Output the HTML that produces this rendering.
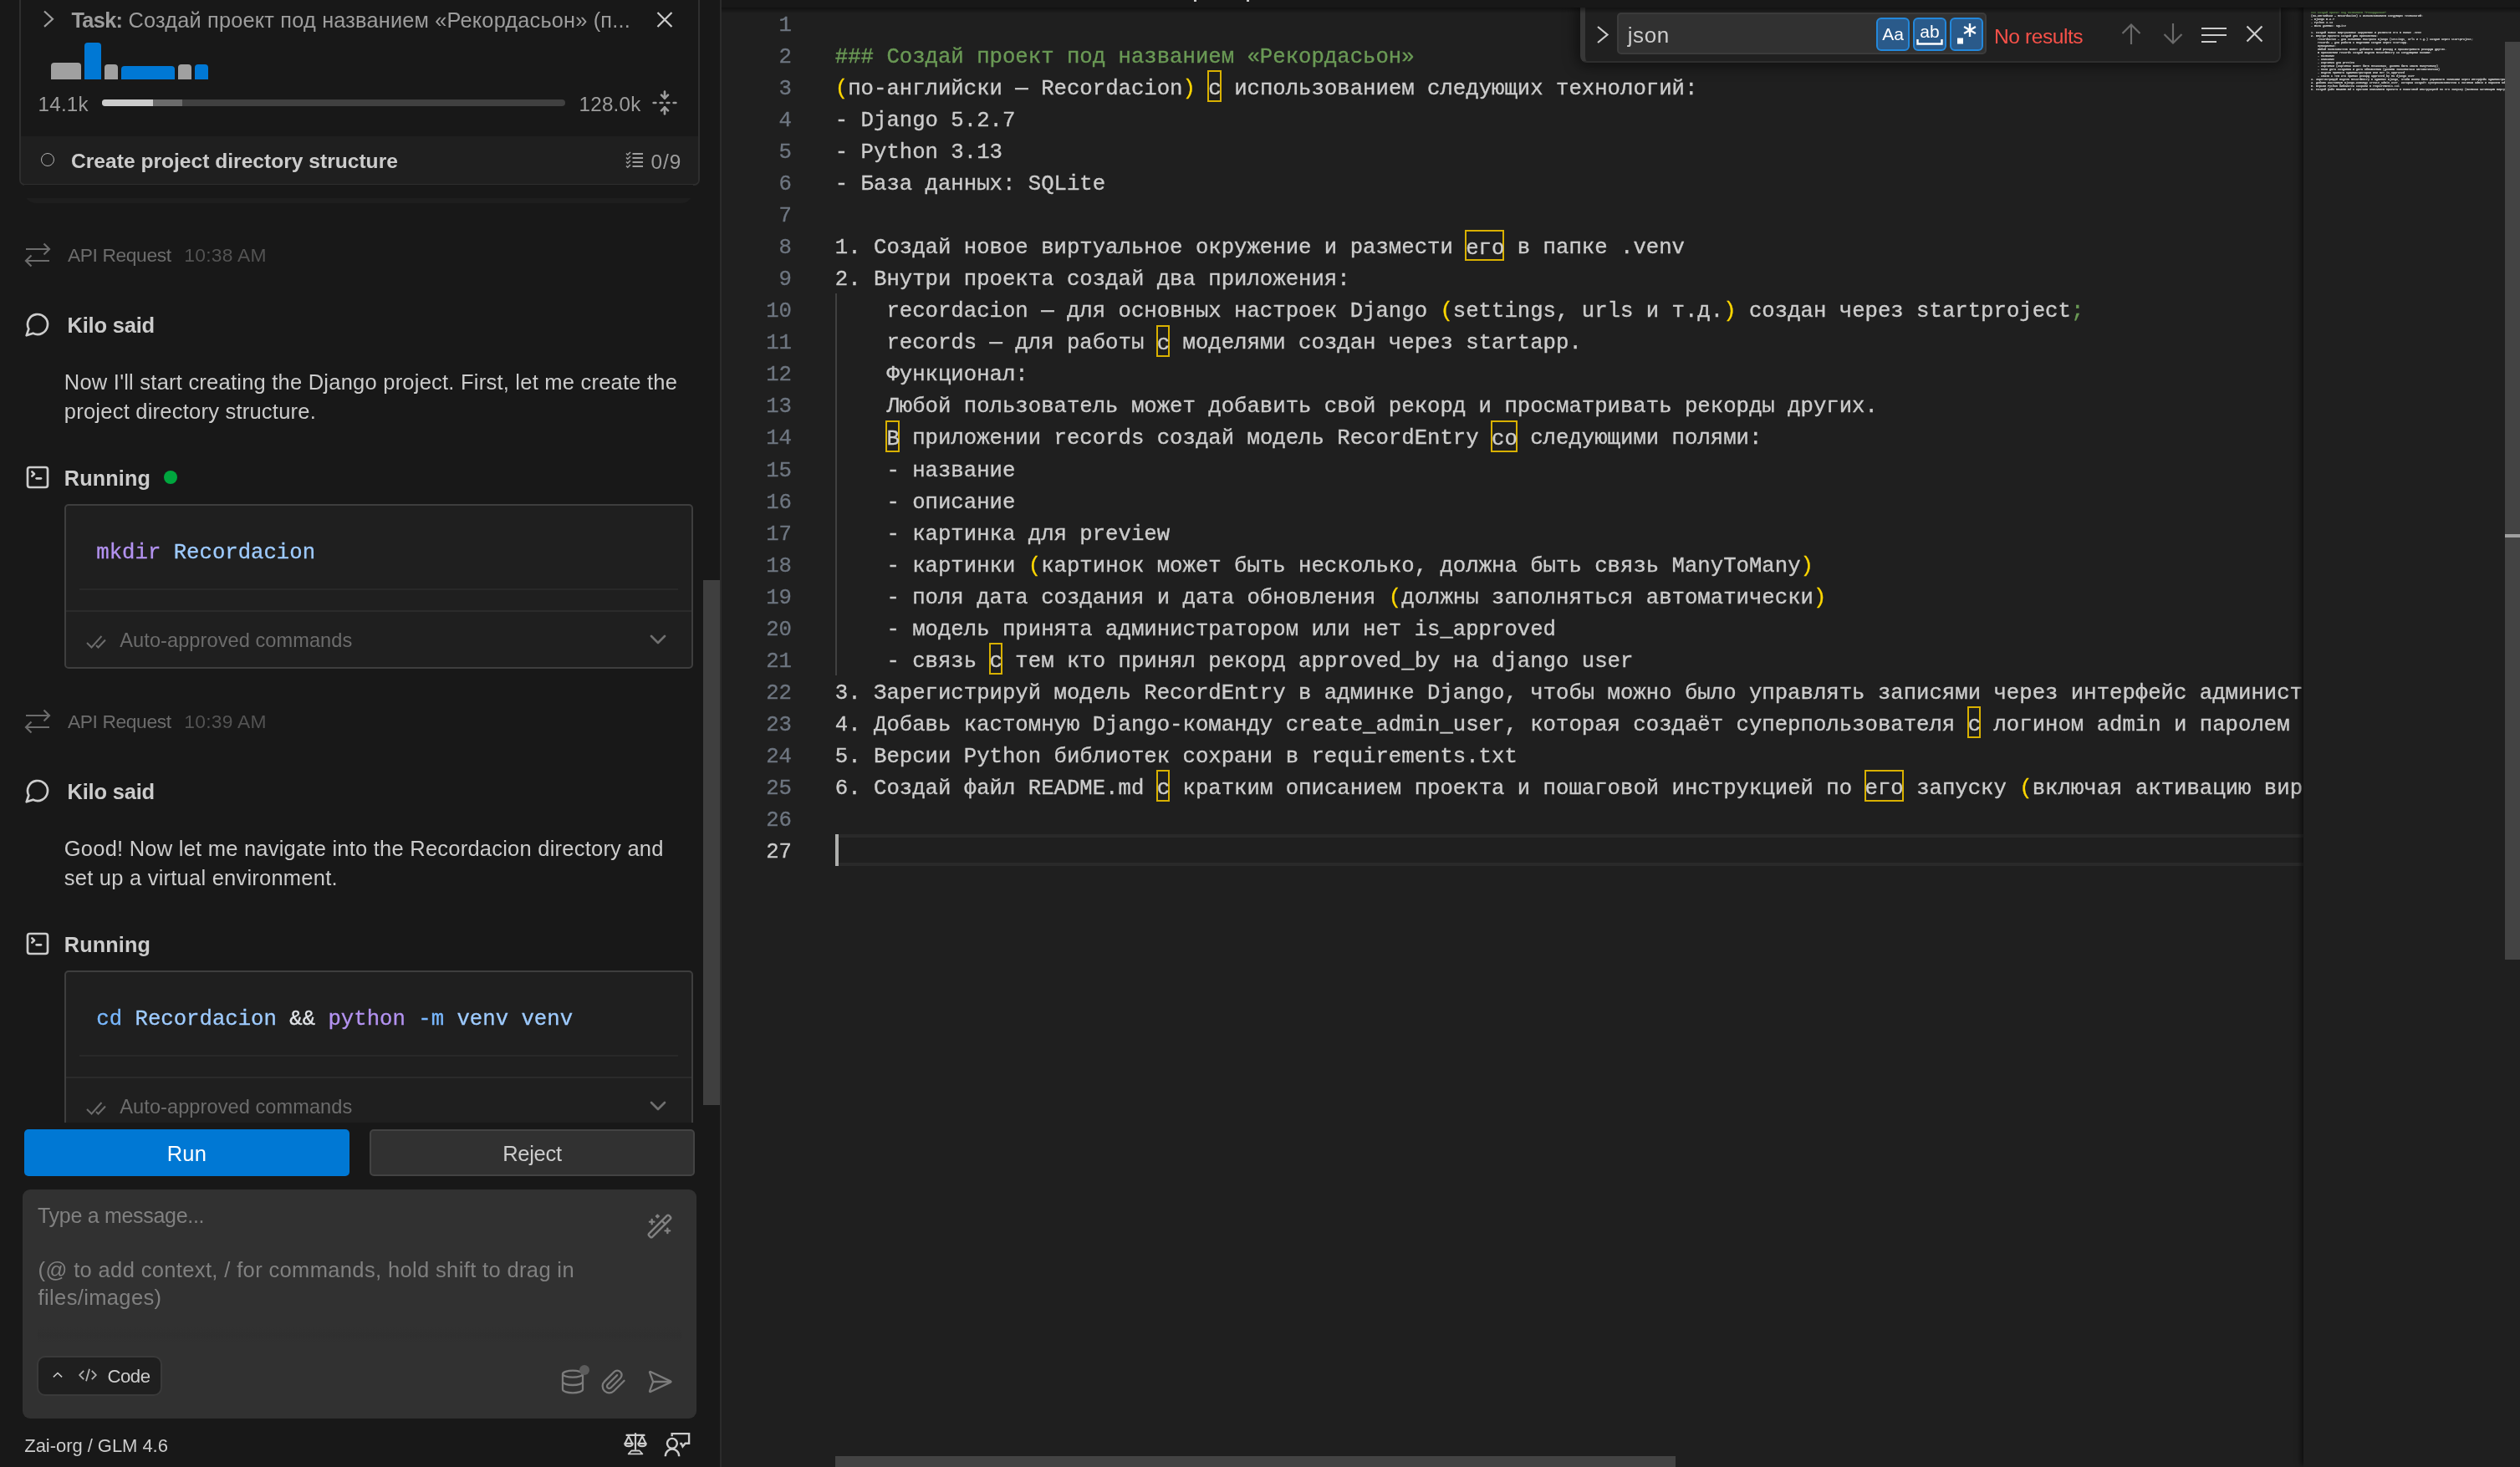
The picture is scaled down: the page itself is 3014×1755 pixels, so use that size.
<!DOCTYPE html>
<html lang="en">
<head>
<meta charset="utf-8">
<title>Kilo Code - Recordacion</title>
<style>
*{box-sizing:border-box;margin:0;padding:0}
html,body{width:3014px;height:1755px;overflow:hidden;background:#181818}
body{position:relative;font-family:"Liberation Sans",sans-serif;color:#cccccc;-webkit-font-smoothing:antialiased}
.abs{position:absolute}
.t{position:absolute;white-space:pre;line-height:32px;font-size:25.5px;letter-spacing:.2px}
.b{font-weight:bold}
svg{position:absolute;overflow:visible}
.ic{fill:none;stroke:currentColor;stroke-width:2;stroke-linecap:round;stroke-linejoin:round}
/* sidebar */
#side{will-change:transform;position:absolute;left:0;top:0;width:862px;height:1755px;background:#181818;overflow:hidden}
#chat{position:absolute;left:0;top:0;width:862px;height:1343px;overflow:hidden}
.card{position:absolute;left:23px;top:-10px;width:814px;height:232px;border:2px solid #2e2e2e;border-radius:7px;background:#181818}
.todo{position:absolute;left:0;bottom:0;width:810px;height:57px;background:#1f1f1f;border-radius:0 0 5px 5px}
.bar{position:absolute;border-radius:4px 4px 0 0}
.codebox{position:absolute;left:77px;width:752px;height:197.3px;border:2px solid #3e3e3e;border-radius:5px;background:#1f1f1f}
.mono{font-family:"Liberation Mono",monospace}
.code{-webkit-text-stroke:.3px currentColor;position:absolute;white-space:pre;font-family:"Liberation Mono",monospace;font-size:25.66px;line-height:38px}
/* editor */
#ed{will-change:transform;position:absolute;left:862px;top:0;width:2152px;height:1755px;background:#1f1f1f;overflow:hidden}
.ln{-webkit-text-stroke:.3px currentColor;position:absolute;left:0;width:85px;text-align:right;color:#6e7681;font-family:"Liberation Mono",monospace;font-size:25.66px;line-height:38px;height:38px;white-space:pre}
.l{-webkit-text-stroke:.35px currentColor;position:absolute;left:136.8px;height:38px;color:#cccccc;font-family:"Liberation Mono",monospace;font-size:25.66px;line-height:38px;white-space:pre}
.g{color:#6a9955}.y{color:#ffd700}
.u{box-shadow:inset 0 0 0 2px #d9b100;padding:7.6px 0 1.3px 1px;margin-left:-1px}
.tog{top:21px;width:40px;height:40px;border-radius:6px;background:#2a5a8a;border:2px solid #2488db}
.ml{position:absolute;left:0;white-space:pre;font-family:"Liberation Mono",monospace;font-size:16.665px;line-height:20px;height:20px;color:#ededed;font-weight:bold}
.ml.g{color:#6a9955}
</style>
</head>
<body>
<div id="side">
<div id="chat">
<!-- task card -->
<div class="card"><div class="todo"></div></div>
<svg style="left:45.5px;top:6.2px" width="32" height="32" viewBox="0 0 32 32"><path d="M7 7.5 L17 16.7 L7 25.9" fill="none" stroke="#9d9d9d" stroke-width="2.2"/></svg>
<div class="t" id="title" style="left:85.4px;top:8px;color:#9d9d9d;font-size:25.3px;letter-spacing:.2px"><span class="b" style="letter-spacing:-.65px">Task:</span> Создай проект под названием «Рекордасьон» (п...</div>
<svg style="left:779px;top:7px" width="32" height="32" viewBox="0 0 32 32"><path d="M7.5 8 L24.5 25 M24.5 8 L7.5 25" fill="none" stroke="#cccccc" stroke-width="2.2"/></svg>
<div class="bar" style="left:61px;top:75px;width:36px;height:20px;background:#a0a0a0"></div>
<div class="bar" style="left:101px;top:51px;width:20px;height:44px;background:#0078d4"></div>
<div class="bar" style="left:125px;top:77px;width:16px;height:18px;background:#a0a0a0"></div>
<div class="bar" style="left:145px;top:79px;width:64px;height:16px;background:#0078d4"></div>
<div class="bar" style="left:213px;top:77px;width:16px;height:18px;background:#a0a0a0"></div>
<div class="bar" style="left:233px;top:77px;width:16px;height:18px;background:#0078d4"></div>
<div class="t" id="k14" style="left:45.5px;top:109px;color:#9d9d9d;font-size:24.2px;letter-spacing:.25px">14.1k</div>
<div class="abs" style="left:122px;top:119px;width:554px;height:8px;border-radius:4px;background:#404040;overflow:hidden"><div class="abs" style="left:0;top:0;width:96px;height:8px;background:#6b6b6b"></div><div class="abs" style="left:0;top:0;width:61px;height:8px;background:#cccccc"></div></div>
<div class="t" id="k128" style="left:692.5px;top:109px;color:#9d9d9d;font-size:24.2px;letter-spacing:.25px">128.0k</div>
<svg style="left:779px;top:107px;color:#9d9d9d" width="32" height="32" viewBox="0 0 24 24" class="ic"><path d="M12 22v-6"/><path d="M12 8V2"/><path d="M4 12H2"/><path d="M10 12H8"/><path d="M16 12h-2"/><path d="M22 12h-2"/><path d="m15 19-3-3-3 3"/><path d="m15 5-3 3-3-3"/></svg>
<div class="abs" style="left:49px;top:183px;width:16px;height:16px;border:1.9px solid #b0b0b0;border-radius:50%"></div>
<div class="t b" id="todo" style="left:85px;top:177px;color:#cccccc;font-size:24.6px;letter-spacing:0">Create project directory structure</div>
<svg style="left:748px;top:181px" width="22" height="20" viewBox="0 0 22 20" fill="none" stroke="#9d9d9d" stroke-width="2"><path d="M8.5 3h12.5M8.5 8h12.5M8.5 13h12.5M8.5 18h12.5"/><path d="M1 2.5l1.7 1.7L6 1M1 7.5l1.7 1.7L6 6M1 12.5l1.7 1.7L6 11M1 17.5l1.7 1.7L6 16" stroke-width="1.6"/></svg>
<div class="t" id="n09" style="left:778.5px;top:177.5px;color:#9d9d9d;font-size:24.4px;letter-spacing:.9px">0/9</div>
<!-- prev message remnant -->
<div class="abs" style="left:29px;top:225px;width:800px;height:18px;border-radius:0 0 14px 14px;background:#1e1e1e"></div>
<div class="abs" style="left:29px;top:221px;width:800px;height:16px;background:#181818"></div>

<svg style="left:29px;top:289px" width="32" height="32" viewBox="0 0 32 32" fill="none" stroke="#6c6c6c" stroke-width="2.2"><path d="M2 9H30M23.5 2.5L30 9L23.5 15.5"/><path d="M30 23H2M8.5 16.5L2 23L8.5 29.5"/></svg>
<div class="t" id="api0" style="left:81px;top:289px;color:#6c6c6c;font-size:22.8px;letter-spacing:-.4px">API Request</div>
<div class="t" id="time0" style="left:220.3px;top:289px;color:#535353;font-size:22.8px;letter-spacing:.25px">10:38 AM</div>
<svg style="left:29px;top:372px;color:#cccccc" width="32" height="32" viewBox="0 0 24 24" class="ic"><path d="M7.9 20A9 9 0 1 0 4 16.1L2 22Z"/></svg>
<div class="t b" id="kilo0" style="left:80.5px;top:372.5px;font-size:25.5px;letter-spacing:-.2px">Kilo said</div>
<div class="t" id="para0" style="left:76.8px;top:440px;line-height:34.7px;letter-spacing:.23px">Now I'll start creating the Django project. First, let me create the
project directory structure.</div>
<svg style="left:29px;top:555px;color:#cccccc" width="32" height="32" viewBox="0 0 24 24" class="ic"><path d="m7 11 2-2-2-2"/><path d="M11 13h4"/><rect width="18" height="18" x="3" y="3" rx="2" ry="2"/></svg>
<div class="t b" id="run0" style="left:76.8px;top:556px;font-size:25.2px;letter-spacing:.15px">Running</div>
<div class="abs" style="left:196px;top:563px;width:16px;height:16px;border-radius:50%;background:#00a63e"></div>
<div class="codebox" style="top:603px"></div>
<div class="code" id="code0" style="left:115.3px;top:643px"><span style="color:#b392f0">mkdir</span> <span style="color:#9ecbff">Recordacion</span></div>
<div class="abs" style="left:95px;top:704px;width:716px;height:2px;background:#282828"></div>
<div class="abs" style="left:79px;top:730px;width:748px;height:2px;background:#2b2b2b"></div>
<svg style="left:102px;top:756px" width="28" height="24" viewBox="0 0 28 24" fill="none" stroke="#6c6c6c" stroke-width="2"><path d="M2 13l5.5 5.5L19.5 5"/><path d="M13 16l2.5 2.5L24 9.5"/></svg>
<div class="t" id="auto0" style="left:143.3px;top:750px;color:#6c6c6c;font-size:23.6px;letter-spacing:.06px">Auto-approved commands</div>
<svg style="left:771px;top:748.5px;color:#707070" width="32" height="32" viewBox="0 0 24 24" class="ic"><path d="m6 9 6 6 6-6"/></svg>
<svg style="left:29px;top:847px" width="32" height="32" viewBox="0 0 32 32" fill="none" stroke="#6c6c6c" stroke-width="2.2"><path d="M2 9H30M23.5 2.5L30 9L23.5 15.5"/><path d="M30 23H2M8.5 16.5L2 23L8.5 29.5"/></svg>
<div class="t" id="api1" style="left:81px;top:847px;color:#6c6c6c;font-size:22.8px;letter-spacing:-.4px">API Request</div>
<div class="t" id="time1" style="left:220.3px;top:847px;color:#535353;font-size:22.8px;letter-spacing:.25px">10:39 AM</div>
<svg style="left:29px;top:930px;color:#cccccc" width="32" height="32" viewBox="0 0 24 24" class="ic"><path d="M7.9 20A9 9 0 1 0 4 16.1L2 22Z"/></svg>
<div class="t b" id="kilo1" style="left:80.5px;top:930.5px;font-size:25.5px;letter-spacing:-.2px">Kilo said</div>
<div class="t" id="para1" style="left:76.8px;top:998px;line-height:34.7px;letter-spacing:.23px">Good! Now let me navigate into the Recordacion directory and
set up a virtual environment.</div>
<svg style="left:29px;top:1113px;color:#cccccc" width="32" height="32" viewBox="0 0 24 24" class="ic"><path d="m7 11 2-2-2-2"/><path d="M11 13h4"/><rect width="18" height="18" x="3" y="3" rx="2" ry="2"/></svg>
<div class="t b" id="run1" style="left:76.8px;top:1114px;font-size:25.2px;letter-spacing:.15px">Running</div>
<div class="codebox" style="top:1161px"></div>
<div class="code" id="code1" style="left:115.3px;top:1201px"><span style="color:#79b8ff">cd</span> <span style="color:#9ecbff">Recordacion</span> <span style="color:#e1e4e8">&amp;&amp;</span> <span style="color:#b392f0">python</span> <span style="color:#79b8ff">-m</span> <span style="color:#9ecbff">venv venv</span></div>
<div class="abs" style="left:95px;top:1262px;width:716px;height:2px;background:#282828"></div>
<div class="abs" style="left:79px;top:1288px;width:748px;height:2px;background:#2b2b2b"></div>
<svg style="left:102px;top:1314px" width="28" height="24" viewBox="0 0 28 24" fill="none" stroke="#6c6c6c" stroke-width="2"><path d="M2 13l5.5 5.5L19.5 5"/><path d="M13 16l2.5 2.5L24 9.5"/></svg>
<div class="t" id="auto1" style="left:143.3px;top:1308px;color:#6c6c6c;font-size:23.6px;letter-spacing:.06px">Auto-approved commands</div>
<svg style="left:771px;top:1306.5px;color:#707070" width="32" height="32" viewBox="0 0 24 24" class="ic"><path d="m6 9 6 6 6-6"/></svg>
<div class="abs" style="left:841px;top:694px;width:20px;height:628px;background:#3f3f3f"></div>
</div>
<!-- buttons -->
<div class="abs" style="left:29px;top:1351px;width:389px;height:56px;border-radius:5px;background:#0078d4"></div>
<div class="t" style="left:29px;top:1364px;width:389px;text-align:center;color:#ffffff;font-size:25.5px;letter-spacing:.3px"><span id="run">Run</span></div>
<div class="abs" style="left:442px;top:1351px;width:389px;height:56px;border-radius:5px;background:#313131;border:2px solid #434343"></div>
<div class="t" style="left:442px;top:1364px;width:389px;text-align:center;color:#cccccc;font-size:25.5px;letter-spacing:-.3px"><span id="rej">Reject</span></div>
<!-- input -->
<div class="abs" style="left:27px;top:1423px;width:806px;height:274px;border-radius:9px;background:#313131"></div>
<div class="t" id="ph1" style="left:45px;top:1438px;color:#808080;font-size:25px;letter-spacing:-.3px">Type a message...</div>
<div class="t" id="ph2" style="left:45.6px;top:1503px;color:#808080;line-height:32.8px;letter-spacing:.36px">(@ to add context, / for commands, hold shift to drag in
files/images)</div>
<svg style="stroke-width:1.8;left:773px;top:1450.5px;color:#828282" width="32" height="32" viewBox="0 0 24 24" class="ic"><path d="m21.64 3.64-1.28-1.28a1.21 1.21 0 0 0-1.72 0L2.36 18.64a1.21 1.21 0 0 0 0 1.72l1.28 1.28a1.2 1.2 0 0 0 1.72 0L21.64 5.36a1.2 1.2 0 0 0 0-1.72"/><path d="m14 7 3 3"/><path d="M5 6v4"/><path d="M19 14v4"/><path d="M10 2v2"/><path d="M7 8H3"/><path d="M21 16h-4"/><path d="M11 3H9"/></svg>
<div class="abs" style="left:45px;top:1588px;width:770px;height:18px;background:linear-gradient(to bottom,rgba(49,49,49,0),rgba(43,43,43,.3) 50%,rgba(49,49,49,0))"></div>
<!-- mode button -->
<div class="abs" style="left:43.5px;top:1621.5px;width:150.5px;height:48.5px;border-radius:10px;background:#1f1f1f;border:2px solid #3a3a3a"></div>
<svg style="left:60px;top:1636px" width="18" height="18" viewBox="0 0 18 18" fill="none" stroke="#cccccc" stroke-width="1.5"><path d="M3.9 11.4L9 6.5L14.1 11.4"/></svg>
<svg style="left:92px;top:1634px" width="26" height="22" viewBox="0 0 26 22" fill="none" stroke="#b0b0b0" stroke-width="1.8"><path d="M8.2 5.8L3.2 11L8.2 16.2M17.8 5.8L22.8 11L17.8 16.2M15 3.7L11 18.3"/></svg>
<div class="t" id="codeb" style="left:128.5px;top:1631px;color:#cccccc;font-size:22.2px;letter-spacing:-.5px">Code</div>
<!-- right icons -->
<svg style="stroke-width:1.7;left:669px;top:1637px;color:#7c7c7c" width="32" height="32" viewBox="0 0 24 24" class="ic"><ellipse cx="12" cy="5" rx="9" ry="3"/><path d="M3 5V19A9 3 0 0 0 21 19V5"/><path d="M3 12A9 3 0 0 0 21 12"/></svg>
<div class="abs" style="left:693px;top:1633px;width:12px;height:12px;border-radius:50%;background:#5c5c5c"></div>
<svg style="stroke-width:1.7;left:718px;top:1637px;color:#7c7c7c" width="32" height="32" viewBox="0 0 24 24" class="ic"><path d="m21.44 11.05-9.19 9.19a6 6 0 0 1-8.49-8.49l8.57-8.57A4 4 0 1 1 18 8.84l-8.59 8.57a2 2 0 0 1-2.83-2.83l8.49-8.48"/></svg>
<svg style="stroke-width:1.7;left:773px;top:1637px;color:#7c7c7c" width="32" height="32" viewBox="0 0 24 24" class="ic"><path d="M3.714 3.048a.498.498 0 0 0-.683.627l2.843 7.627a2 2 0 0 1 0 1.396l-2.842 7.627a.498.498 0 0 0 .682.627l18-8.5a.5.5 0 0 0 0-.904z"/><path d="M6 12h16"/></svg>
<!-- footer -->
<div class="t" id="model" style="left:29.3px;top:1714px;color:#cccccc;font-size:22px;letter-spacing:-.05px">Zai-org / GLM 4.6</div>
<svg style="left:740px;top:1705px" width="100" height="45" viewBox="0 0 100 45" fill="none" stroke="#cccccc" stroke-width="2.2" stroke-linejoin="miter"><path d="M20 9.2V29.8M8.6 11.9H31.4"/><path d="M11.9 13.2L7.7 21.7M11.9 13.2L16.2 21.7M28.1 13.2L23.8 21.7M28.1 13.2L32.3 21.7" stroke-width="2"/><path d="M7.3 21.8H16.7C16.7 26.3 7.3 26.3 7.3 21.8ZM23.3 21.8H32.7C32.7 26.3 23.3 26.3 23.3 21.8Z" stroke-linejoin="round"/><path d="M15.2 30.5H24.8L28.3 34.4H11.7Z" stroke-width="1.8" stroke-linejoin="round"/><circle cx="63.9" cy="21.8" r="5.95" stroke-width="2.4"/><path d="M55.8 37.2C55.8 25.8 72.2 25.8 72.2 37.2" stroke-width="2.4"/><path d="M63.7 13.2V10.1H84.1V21.8H79.6L76.5 25.5L75 22H73.2" stroke-width="2.4"/></svg>

</div>
<div id="ed">
<div class="abs" style="left:137px;top:998.00px;width:1757px;height:38px;border-top:4px solid #292929;border-bottom:4px solid #292929"></div>
<div class="abs" style="left:137px;top:351.03px;width:2px;height:456.68px;background:#404040"></div>
<div class="ln" style="top:11.72px;color:#6e7681">1</div>
<div class="ln" style="top:49.78px;color:#6e7681">2</div>
<div class="l" style="top:49.78px"><span class="g">### Создай проект под названием «Рекордасьон»</span></div>
<div class="ln" style="top:87.83px;color:#6e7681">3</div>
<div class="l" style="top:87.83px"><span class="y">(</span>по-английски — Recordacion<span class="y">)</span> <span class="u">с</span> использованием следующих технологий:</div>
<div class="ln" style="top:125.89px;color:#6e7681">4</div>
<div class="l" style="top:125.89px">- Django 5.2.7</div>
<div class="ln" style="top:163.95px;color:#6e7681">5</div>
<div class="l" style="top:163.95px">- Python 3.13</div>
<div class="ln" style="top:202.01px;color:#6e7681">6</div>
<div class="l" style="top:202.01px">- База данных: SQLite</div>
<div class="ln" style="top:240.06px;color:#6e7681">7</div>
<div class="ln" style="top:278.12px;color:#6e7681">8</div>
<div class="l" style="top:278.12px">1. Создай новое виртуальное окружение и размести <span class="u">его</span> в папке .venv</div>
<div class="ln" style="top:316.18px;color:#6e7681">9</div>
<div class="l" style="top:316.18px">2. Внутри проекта создай два приложения:</div>
<div class="ln" style="top:354.23px;color:#6e7681">10</div>
<div class="l" style="top:354.23px">    recordacion — для основных настроек Django <span class="y">(</span>settings, urls и т.д.<span class="y">)</span> создан через startproject<span class="g">;</span></div>
<div class="ln" style="top:392.29px;color:#6e7681">11</div>
<div class="l" style="top:392.29px">    records — для работы <span class="u">с</span> моделями создан через startapp.</div>
<div class="ln" style="top:430.35px;color:#6e7681">12</div>
<div class="l" style="top:430.35px">    Функционал:</div>
<div class="ln" style="top:468.40px;color:#6e7681">13</div>
<div class="l" style="top:468.40px">    Любой пользователь может добавить свой рекорд и просматривать рекорды других.</div>
<div class="ln" style="top:506.46px;color:#6e7681">14</div>
<div class="l" style="top:506.46px">    <span class="u">В</span> приложении records создай модель RecordEntry <span class="u">со</span> следующими полями:</div>
<div class="ln" style="top:544.52px;color:#6e7681">15</div>
<div class="l" style="top:544.52px">    - название</div>
<div class="ln" style="top:582.58px;color:#6e7681">16</div>
<div class="l" style="top:582.58px">    - описание</div>
<div class="ln" style="top:620.63px;color:#6e7681">17</div>
<div class="l" style="top:620.63px">    - картинка для preview</div>
<div class="ln" style="top:658.69px;color:#6e7681">18</div>
<div class="l" style="top:658.69px">    - картинки <span class="y">(</span>картинок может быть несколько, должна быть связь ManyToMany<span class="y">)</span></div>
<div class="ln" style="top:696.75px;color:#6e7681">19</div>
<div class="l" style="top:696.75px">    - поля дата создания и дата обновления <span class="y">(</span>должны заполняться автоматически<span class="y">)</span></div>
<div class="ln" style="top:734.80px;color:#6e7681">20</div>
<div class="l" style="top:734.80px">    - модель принята администратором или нет is_approved</div>
<div class="ln" style="top:772.86px;color:#6e7681">21</div>
<div class="l" style="top:772.86px">    - связь <span class="u">с</span> тем кто принял рекорд approved_by на django user</div>
<div class="ln" style="top:810.92px;color:#6e7681">22</div>
<div class="l" style="top:810.92px">3. Зарегистрируй модель RecordEntry в админке Django, чтобы можно было управлять записями через интерфейс администратора.</div>
<div class="ln" style="top:848.97px;color:#6e7681">23</div>
<div class="l" style="top:848.97px">4. Добавь кастомную Django-команду create_admin_user, которая создаёт суперпользователя <span class="u">с</span> логином admin и паролем admin.</div>
<div class="ln" style="top:887.03px;color:#6e7681">24</div>
<div class="l" style="top:887.03px">5. Версии Python библиотек сохрани в requirements.txt</div>
<div class="ln" style="top:925.09px;color:#6e7681">25</div>
<div class="l" style="top:925.09px">6. Создай файл README.md <span class="u">с</span> кратким описанием проекта и пошаговой инструкцией по <span class="u">его</span> запуску <span class="y">(</span>включая активацию виртуального окружения, установку зависимостей<span class="y">)</span>.</div>
<div class="ln" style="top:963.15px;color:#6e7681">26</div>
<div class="ln" style="top:1001.20px;color:#cccccc">27</div>
<div class="abs" style="left:136.8px;top:998.00px;width:4.4px;height:38px;background:#aeafad"></div>
<!-- minimap -->
<div class="abs" style="left:1893px;top:0;width:241px;height:1755px;background:#1f1f1f;box-shadow:-6px 0 6px -3px rgba(0,0,0,.55)"></div>
<div class="abs" id="mm" style="left:1901.5px;top:8.5px;width:1160px;height:600px;overflow:hidden;transform:scale(.2);transform-origin:0 0">
<div class="ml g" style="top:20px">### Создай проект под названием «Рекордасьон»</div>
<div class="ml" style="top:40px">(по-английски — Recordacion) с использованием следующих технологий:</div>
<div class="ml" style="top:60px">- Django 5.2.7</div>
<div class="ml" style="top:80px">- Python 3.13</div>
<div class="ml" style="top:100px">- База данных: SQLite</div>
<div class="ml" style="top:140px">1. Создай новое виртуальное окружение и размести его в папке .venv</div>
<div class="ml" style="top:160px">2. Внутри проекта создай два приложения:</div>
<div class="ml" style="top:180px">    recordacion — для основных настроек Django (settings, urls и т.д.) создан через startproject;</div>
<div class="ml" style="top:200px">    records — для работы с моделями создан через startapp.</div>
<div class="ml" style="top:220px">    Функционал:</div>
<div class="ml" style="top:240px">    Любой пользователь может добавить свой рекорд и просматривать рекорды других.</div>
<div class="ml" style="top:260px">    В приложении records создай модель RecordEntry со следующими полями:</div>
<div class="ml" style="top:280px">    - название</div>
<div class="ml" style="top:300px">    - описание</div>
<div class="ml" style="top:320px">    - картинка для preview</div>
<div class="ml" style="top:340px">    - картинки (картинок может быть несколько, должна быть связь ManyToMany)</div>
<div class="ml" style="top:360px">    - поля дата создания и дата обновления (должны заполняться автоматически)</div>
<div class="ml" style="top:380px">    - модель принята администратором или нет is_approved</div>
<div class="ml" style="top:400px">    - связь с тем кто принял рекорд approved_by на django user</div>
<div class="ml" style="top:420px">3. Зарегистрируй модель RecordEntry в админке Django, чтобы можно было управлять записями через интерфейс администрато</div>
<div class="ml" style="top:440px">4. Добавь кастомную Django-команду create_admin_user, которая создаёт суперпользователя с логином admin и паролем admi</div>
<div class="ml" style="top:460px">5. Версии Python библиотек сохрани в requirements.txt</div>
<div class="ml" style="top:480px">6. Создай файл README.md с кратким описанием проекта и пошаговой инструкцией по его запуску (включая активацию виртуал</div>
</div>
<!-- v scrollbar -->
<div class="abs" style="left:2134px;top:50px;width:18px;height:1098px;background:#434343"></div>
<div class="abs" style="left:2134px;top:639px;width:18px;height:4px;background:#a0a0a0"></div>
<!-- h scrollbar -->
<div class="abs" style="left:137px;top:1741.5px;width:1005px;height:14px;background:#434343"></div>
<!-- find widget -->
<div class="abs" style="left:1028px;top:8.5px;width:838px;height:66px;background:#202020;border-left:6px solid #383838;border-bottom:2px solid #2e2e2e;border-right:2px solid #2a2a2a;border-radius:0 0 8px 8px;box-shadow:0 0 16px 4px rgba(0,0,0,.5)"></div>
<svg style="left:1044px;top:25px" width="24" height="32" viewBox="0 0 24 32" fill="none" stroke="#cccccc" stroke-width="2.2"><path d="M5 7L16.5 16.5L5 26"/></svg>
<div class="abs" style="left:1072px;top:15px;width:442px;height:50px;background:#313131;border:2px solid #3c3c3c;border-radius:5px"></div>
<div class="t" id="json" style="left:1084.7px;top:26px;color:#cccccc;font-size:26px;letter-spacing:.6px">json</div>
<div class="abs tog" style="left:1382px"></div><div class="abs tog" style="left:1426px"></div><div class="abs tog" style="left:1470px"></div>
<div class="t" style="left:1382px;top:25px;width:40px;text-align:center;font-size:21px;letter-spacing:0;color:#ffffff">Aa</div>
<div class="t" style="left:1426px;top:22px;width:40px;text-align:center;font-size:21px;letter-spacing:0;color:#ffffff">ab</div>
<svg style="left:1430px;top:46px" width="32" height="8" viewBox="0 0 32 8" fill="none" stroke="#ffffff" stroke-width="2.4"><path d="M1.5 1V6.5H30.5V1"/></svg>
<svg style="left:1474px;top:24px" width="32" height="34" viewBox="0 0 32 34" fill="none" stroke="#ffffff" stroke-width="2.4"><path d="M20 4V20M13.1 8L26.9 16M26.9 8L13.1 16"/><rect x="5" y="21.5" width="7" height="7" fill="#ffffff" stroke="none"/></svg>
<div class="t" id="nores" style="left:1523px;top:28px;color:#f85149;font-size:24.6px;letter-spacing:-.45px">No results</div>
<svg style="left:1674px;top:26px" width="28" height="30" viewBox="0 0 28 30" fill="none" stroke="#6a6a6a" stroke-width="2.2"><path d="M13 27V3.5M2.5 14L13 3.5L23.5 14"/></svg>
<svg style="left:1724px;top:26px" width="28" height="30" viewBox="0 0 28 30" fill="none" stroke="#6a6a6a" stroke-width="2.2"><path d="M13 2V25.5M2.5 15L13 25.5L23.5 15"/></svg>
<svg style="left:1770px;top:28px" width="32" height="24" viewBox="0 0 32 24" fill="none" stroke="#cccccc" stroke-width="2.2"><path d="M1 6H31M1 14H31M1 22H19"/></svg>
<svg style="left:1822px;top:26px" width="26" height="30" viewBox="0 0 26 30" fill="none" stroke="#cccccc" stroke-width="2.2"><path d="M3.5 5.5L21.5 23.5M21.5 5.5L3.5 23.5"/></svg>
<!-- top strip -->
<div class="abs" style="left:0;top:8.5px;width:2152px;height:7px;background:linear-gradient(to bottom,rgba(0,0,0,.45),rgba(0,0,0,0))"></div>
<div class="abs" style="left:0;top:0;width:2152px;height:8.5px;background:#181818"></div>
<div class="abs" style="left:566px;top:0;width:3px;height:2px;background:#cccccc"></div>
<div class="abs" style="left:629px;top:0;width:3px;height:2px;background:#cccccc"></div>

</div>
<div class="abs" style="left:861px;top:0;width:2px;height:1755px;background:#2b2b2b"></div>
</body>
</html>
